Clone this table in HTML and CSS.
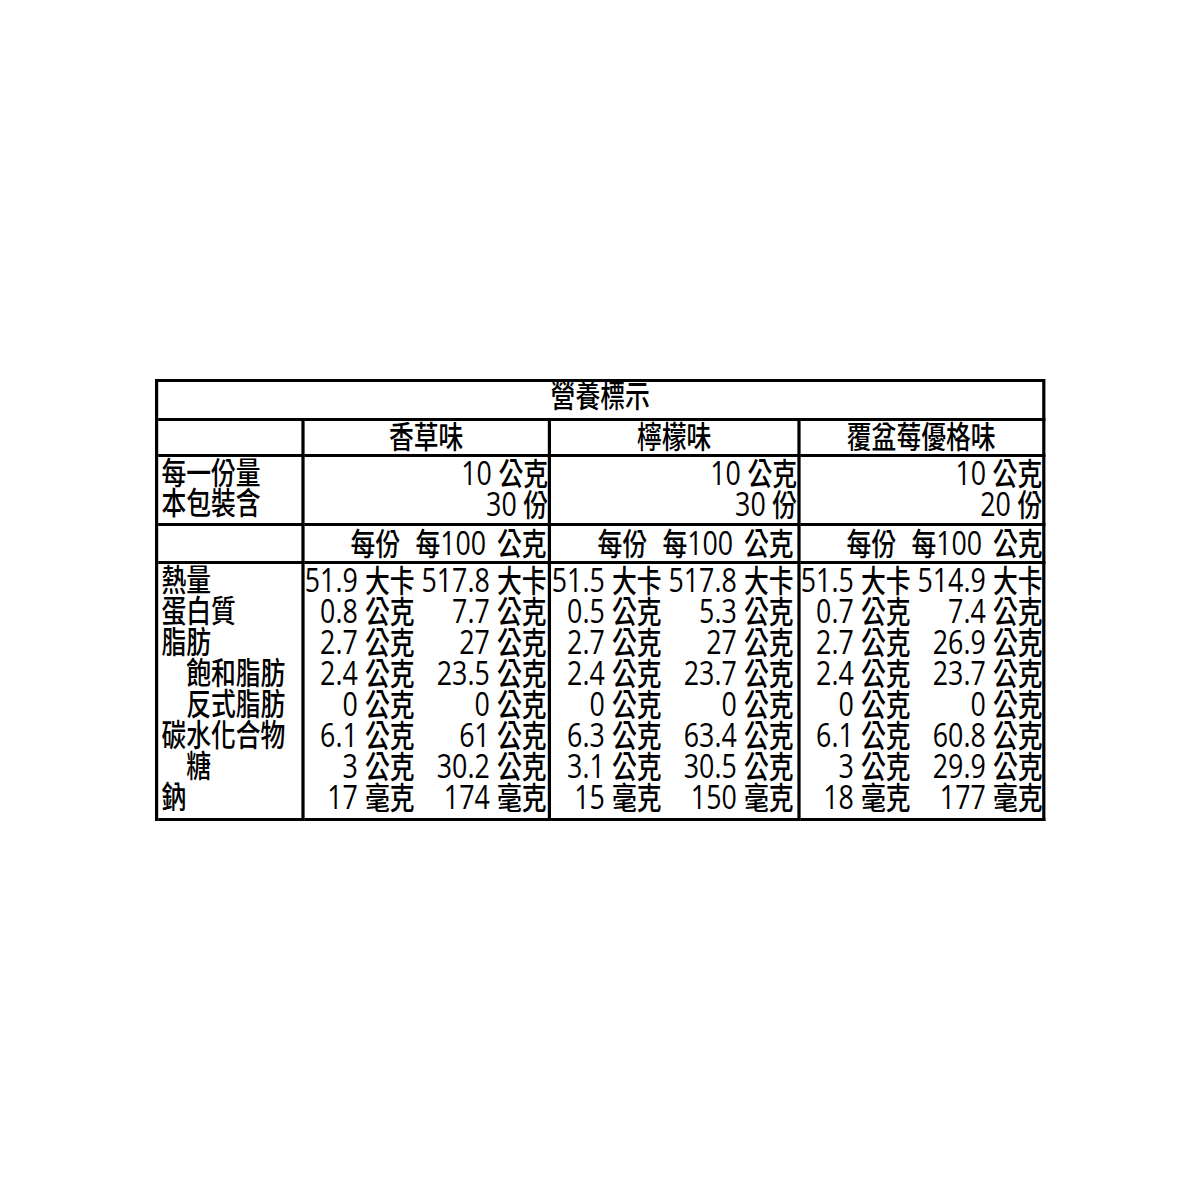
FILE: index.html
```html
<!DOCTYPE html>
<html lang="zh-Hant">
<head>
<meta charset="utf-8">
<title>營養標示</title>
<link rel="stylesheet" href="styles.css">
</head>
<body>
<div class="page">
  <table class="nt">
    <colgroup>
      <col class="c-label">
      <col class="c-a">
      <col class="c-b">
      <col class="c-c">
    </colgroup>
    <tbody>
      <tr class="r-title">
        <td colspan="4" class="center">營養標示</td>
      </tr>
      <tr class="r-flavor">
        <td></td>
        <td class="center">香草味</td>
        <td class="center">檸檬味</td>
        <td class="center">覆盆莓優格味</td>
      </tr>
      <tr class="r-serving">
        <td class="label">每一份量<br>本包裝含</td>
        <td class="right"><span class="n">10</span> 公克<br><span class="n">30</span> 份</td>
        <td class="right"><span class="n">10</span> 公克<br><span class="n">30</span> 份</td>
        <td class="right"><span class="n">10</span> 公克<br><span class="n">20</span> 份</td>
      </tr>
      <tr class="r-per">
        <td></td>
        <td><div class="vals"><span class="hd">每份</span><span class="num per100">每<span class="n">100</span></span><span class="unit">公克</span></div></td>
        <td><div class="vals"><span class="hd">每份</span><span class="num per100">每<span class="n">100</span></span><span class="unit">公克</span></div></td>
        <td><div class="vals"><span class="hd">每份</span><span class="num per100">每<span class="n">100</span></span><span class="unit">公克</span></div></td>
      </tr>
      <tr class="r-data">
        <td class="label">
          <div>熱量</div>
          <div>蛋白質</div>
          <div>脂肪</div>
          <div class="indent">飽和脂肪</div>
          <div class="indent">反式脂肪</div>
          <div>碳水化合物</div>
          <div class="indent">糖</div>
          <div>鈉</div>
        </td>
        <td>
          <div class="vals data">
            <span class="num">51.9</span><span class="unit">大卡</span><span class="num">517.8</span><span class="unit">大卡</span>
            <span class="num">0.8</span><span class="unit">公克</span><span class="num">7.7</span><span class="unit">公克</span>
            <span class="num">2.7</span><span class="unit">公克</span><span class="num">27</span><span class="unit">公克</span>
            <span class="num">2.4</span><span class="unit">公克</span><span class="num">23.5</span><span class="unit">公克</span>
            <span class="num">0</span><span class="unit">公克</span><span class="num">0</span><span class="unit">公克</span>
            <span class="num">6.1</span><span class="unit">公克</span><span class="num">61</span><span class="unit">公克</span>
            <span class="num">3</span><span class="unit">公克</span><span class="num">30.2</span><span class="unit">公克</span>
            <span class="num">17</span><span class="unit">毫克</span><span class="num">174</span><span class="unit">毫克</span>
          </div>
        </td>
        <td>
          <div class="vals data">
            <span class="num">51.5</span><span class="unit">大卡</span><span class="num">517.8</span><span class="unit">大卡</span>
            <span class="num">0.5</span><span class="unit">公克</span><span class="num">5.3</span><span class="unit">公克</span>
            <span class="num">2.7</span><span class="unit">公克</span><span class="num">27</span><span class="unit">公克</span>
            <span class="num">2.4</span><span class="unit">公克</span><span class="num">23.7</span><span class="unit">公克</span>
            <span class="num">0</span><span class="unit">公克</span><span class="num">0</span><span class="unit">公克</span>
            <span class="num">6.3</span><span class="unit">公克</span><span class="num">63.4</span><span class="unit">公克</span>
            <span class="num">3.1</span><span class="unit">公克</span><span class="num">30.5</span><span class="unit">公克</span>
            <span class="num">15</span><span class="unit">毫克</span><span class="num">150</span><span class="unit">毫克</span>
          </div>
        </td>
        <td>
          <div class="vals data">
            <span class="num">51.5</span><span class="unit">大卡</span><span class="num">514.9</span><span class="unit">大卡</span>
            <span class="num">0.7</span><span class="unit">公克</span><span class="num">7.4</span><span class="unit">公克</span>
            <span class="num">2.7</span><span class="unit">公克</span><span class="num">26.9</span><span class="unit">公克</span>
            <span class="num">2.4</span><span class="unit">公克</span><span class="num">23.7</span><span class="unit">公克</span>
            <span class="num">0</span><span class="unit">公克</span><span class="num">0</span><span class="unit">公克</span>
            <span class="num">6.1</span><span class="unit">公克</span><span class="num">60.8</span><span class="unit">公克</span>
            <span class="num">3</span><span class="unit">公克</span><span class="num">29.9</span><span class="unit">公克</span>
            <span class="num">18</span><span class="unit">毫克</span><span class="num">177</span><span class="unit">毫克</span>
          </div>
        </td>
      </tr>
    </tbody>
  </table>
</div>
</body>
</html>
```

FILE: styles.css
```css
html, body {
  margin: 0;
  padding: 0;
  background: #ffffff;
}

body {
  font-family: "Open Sans", "Noto Sans CJK TC", "Noto Sans CJK SC", sans-serif;
  color: #000000;
}

.page {
  padding: 379px 0 0 155px;
}

.nt {
  transform: scaleX(0.8);
  transform-origin: 0 0;
  border-collapse: separate;
  border-spacing: 0;
  table-layout: fixed;
  width: 1113px;
  border-left: 4px solid #000;
  border-top: 3px solid #000;
  font-size: 31px;
  line-height: 31px;
  font-weight: 500;
}

.c-label { width: 182.5px; }
.c-a { width: 308.75px; }
.c-b { width: 311.25px; }
.c-c { width: 306.5px; }

.nt td {
  box-sizing: border-box;
  border-right: 4px solid #000;
  border-bottom: 3px solid #000;
  padding: 0;
  vertical-align: top;
  white-space: nowrap;
}

.center { text-align: center; }
.right { text-align: right; }

.r-title td {
  height: 39px;
  line-height: 27px;
}

.r-flavor td {
  height: 36px;
  line-height: 30px;
}

.r-serving td {
  height: 69px;
  line-height: 30px;
}

.r-per td {
  height: 38px;
  padding-top: 1px;
}

.r-data td {
  height: 257px;
  padding-top: 0;
}

.nt td.label {
  padding-left: 4px;
}

.indent {
  padding-left: 31px;
}

.vals {
  display: grid;
  grid-template-columns: 67px 72px 93px 74px;
  grid-auto-rows: 31px;
  align-items: baseline;
}

.num {
  text-align: right;
}

.per100 {
  padding-right: 5px;
}

.data .num,
.n {
  font-size: 33.5px;
}

.unit {
  padding-left: 9px;
}

.hd {
  grid-column: 1 / 3;
  text-align: right;
  padding-right: 19px;
}
```
